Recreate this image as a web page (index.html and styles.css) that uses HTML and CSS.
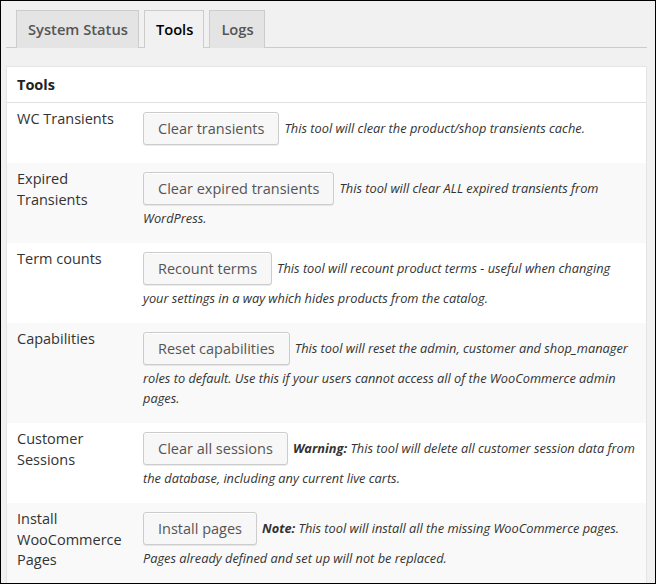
FILE: index.html
```html
<!DOCTYPE html>
<html>
<head>
<meta charset="utf-8">
<link rel="stylesheet" href="styles.css">
</head>
<body>
<div class="frame">
  <div class="tabs">
    <a class="tab">System Status</a><a class="tab active">Tools</a><a class="tab">Logs</a>
  </div>
  <table class="tools">
    <thead>
      <tr><th colspan="2">Tools</th></tr>
    </thead>
    <tbody>
      <tr>
        <th>WC Transients</th>
        <td><span class="button">Clear transients</span><span class="desc">This tool will clear the product/shop transients cache.</span></td>
      </tr>
      <tr class="alt">
        <th>Expired Transients</th>
        <td><span class="button">Clear expired transients</span><span class="desc">This tool will clear ALL expired transients from WordPress.</span></td>
      </tr>
      <tr>
        <th>Term counts</th>
        <td><span class="button">Recount terms</span><span class="desc">This tool will recount product terms - useful when changing your settings in a way which hides products from the catalog.</span></td>
      </tr>
      <tr class="alt">
        <th>Capabilities</th>
        <td><span class="button">Reset capabilities</span><span class="desc">This tool will reset the admin, customer and shop_manager roles to default. Use this if your users cannot access all of the WooCommerce admin pages.</span></td>
      </tr>
      <tr>
        <th>Customer Sessions</th>
        <td><span class="button">Clear all sessions</span><span class="desc"><strong>Warning:</strong> This tool will delete all customer session data from the database, including any current live carts.</span></td>
      </tr>
      <tr class="alt">
        <th>Install WooCommerce Pages</th>
        <td><span class="button">Install pages</span><span class="desc"><strong>Note:</strong> This tool will install all the missing WooCommerce pages. Pages already defined and set up will not be replaced.</span></td>
      </tr>
    </tbody>
  </table>
</div>
</body>
</html>
```

FILE: styles.css
```css
html, body {
  margin: 0;
  padding: 0;
}
body {
  font-family: "Open Sans", "Liberation Sans", sans-serif;
  color: #333;
  background: #fff;
}
.frame {
  width: 656px;
  height: 584px;
  box-sizing: border-box;
  border: 1px solid #000;
  background: #f1f1f1;
  padding: 0 8px 0 5px;
  overflow: hidden;
}
.tabs {
  display: flex;
  gap: 5px;
  padding: 9px 0 0 10px;
  border-bottom: 1px solid #ccc;
  height: 37px;
  box-sizing: content-box;
}
.tab {
  display: block;
  box-sizing: border-box;
  height: 38px;
  padding: 0 10px 0 11px;
  line-height: 36px;
  font-size: 14.7px;
  font-weight: 600;
  color: #555;
  background: #e4e4e4;
  border: 1px solid #ccc;
  border-bottom: none;
}
.tab.active {
  color: #000;
  background: #f1f1f1;
  position: relative;
  z-index: 1;
}
.tools {
  margin-top: 18px;
  width: 641px;
  border-collapse: separate;
  border-spacing: 0;
  background: #fff;
  border: 1px solid #e5e5e5;
}
.tools thead th {
  text-align: left;
  font-size: 14.5px;
  font-weight: 700;
  color: #222;
  padding: 8px 10px;
  line-height: 19px;
  border-bottom: 1px solid #e1e1e1;
}
.tools tbody th {
  width: 106px;
  text-align: left;
  vertical-align: top;
  font-weight: 400;
  font-size: 14.5px;
  line-height: 20.5px;
  color: #333;
  padding: 6px 10px 0 10px;
}
.tools tbody td {
  vertical-align: top;
  padding: 9px 10px 15px 10px;
  font-size: 12.8px;
  line-height: 20px;
}
.tools tr.alt {
  background: #f9f9f9;
}
.button {
  display: inline-block;
  box-sizing: border-box;
  height: 33px;
  line-height: 31px;
  padding: 0 14px;
  margin: 0 5px 3px 0;
  vertical-align: middle;
  font-size: 14.5px;
  font-style: normal;
  color: #555;
  background: #f7f7f7;
  border: 1px solid #ccc;
  border-radius: 3px;
  box-shadow: inset 0 1px 0 #fff, 0 1px 0 rgba(0,0,0,.08);
}
.desc {
  font-style: italic;
  color: #333;
}
.desc strong {
  font-weight: 700;
}
```
